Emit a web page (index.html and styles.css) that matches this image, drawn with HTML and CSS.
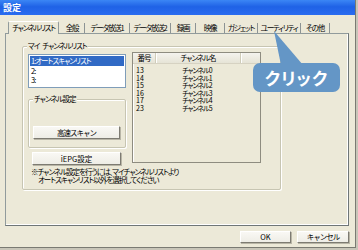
FILE: index.html
```html
<!DOCTYPE html>
<html lang="ja">
<head>
  <meta charset="UTF-8">
  <title>設定</title>
  <link rel="stylesheet" href="styles.css">
</head>
<body>
  <div class="window">
    <div class="titlebar">設定</div>
    <div class="dialog">
      <div class="tabs">
        <div class="tab active" style="width:51px">チャンネルリスト</div>
        <div class="tab" style="width:24px">全般</div>
        <div class="tab" style="width:44px">データ放送1</div>
        <div class="tab" style="width:40px">データ放送2</div>
        <div class="tab" style="width:24px">録画</div>
        <div class="tab" style="width:28px">映像</div>
        <div class="tab" style="width:32px">ガジェット</div>
        <div class="tab" style="width:42px">ユーティリティ</div>
        <div class="tab" style="width:28px">その他</div>
      </div>

      <div class="panel">
        <div class="group my-list">
          <span class="group-label">マイ<span class="gap">チャンネルリスト</span></span>
          <div class="left-col">
            <ul class="listbox">
              <li class="selected">1:オートスキャンリスト</li>
              <li>2:</li>
              <li>3:</li>
            </ul>
            <div class="group ch-settings">
              <span class="group-label">チャンネル設定</span>
              <button class="btn scan-btn">高速スキャン</button>
            </div>
            <button class="btn epg-btn">iEPG設定</button>
            <p class="note">※チャンネル設定を行うには、マイチャンネルリストより<br><span class="indent">オートスキャンリスト以外を選択してください</span></p>
          </div>

          <div class="listview">
            <div class="lv-header">
              <div class="col-num">番号</div>
              <div class="col-name">チャンネル名</div>
              <div class="col-rest"></div>
            </div>
            <div class="lv-rows">
              <div class="lv-row"><span class="col-num">13</span><span class="col-name">チャンネル0</span></div>
              <div class="lv-row"><span class="col-num">14</span><span class="col-name">チャンネル1</span></div>
              <div class="lv-row"><span class="col-num">15</span><span class="col-name">チャンネル2</span></div>
              <div class="lv-row"><span class="col-num">16</span><span class="col-name">チャンネル3</span></div>
              <div class="lv-row"><span class="col-num">17</span><span class="col-name">チャンネル4</span></div>
              <div class="lv-row"><span class="col-num">23</span><span class="col-name">チャンネル5</span></div>
            </div>
          </div>
        </div>
      </div>

      <div class="dialog-buttons">
        <button class="btn ok-btn">OK</button>
        <button class="btn cancel-btn">キャンセル</button>
      </div>
    </div>

    <!-- callout pointing at the utility tab -->
    <svg class="callout-tail" width="40" height="40" viewBox="0 0 40 40">
      <polygon points="1,0 8,34 30,34" fill="#6496c6"/>
    </svg>
    <div class="callout">クリック</div>
  </div>
</body>
</html>
```

FILE: styles.css
```css
body {
  margin: 0;
  width: 358px;
  height: 250px;
  overflow: hidden;
  background-color: #c8c5b8;
  font-family: "Noto Sans CJK JP", "Noto Sans", sans-serif;
  font-feature-settings: "palt";
  font-size: 7.5px;
  letter-spacing: -1px;
  color: #000;
}

.window {
  position: relative;
  width: 355px;
  height: 247px;
  background-color: #ece9d8;
  border-right: 1px solid #7a7a72;
  border-bottom: 1px solid #7a7a72;
}

.titlebar {
  height: 15px;
  line-height: 15px;
  padding-left: 3px;
  background: linear-gradient(#3b86f5, #1f62e6 45%, #2a6cf0);
  color: #fff;
  font-size: 9px;
  font-weight: bold;
  letter-spacing: 0;
}

.dialog {
  padding: 5px 0 0 5px;
}

/* tabs */
.tabs {
  display: flex;
  align-items: flex-end;
  height: 13px;
  padding-left: 3px;
}

.tab {
  height: 10px;
  line-height: 10px;
  text-align: center;
  white-space: nowrap;
  letter-spacing: -1.2px;
  border-right: 1px solid #8c9394;
}

.tab.active {
  position: relative;
  height: 13px;
  line-height: 12px;
  margin-bottom: -1px;
  margin-right: 1px;
  background-color: #ece9d8;
  border: 1px solid #919b9c;
  border-bottom: none;
  border-top-color: #fff;
  border-radius: 2px 2px 0 0;
  z-index: 1;
  box-sizing: border-box;
}

.panel {
  width: 344px;
  height: 193px;
  border: 1px solid #919b9c;
  border-right-color: #6f7677;
  border-bottom-color: #6f7677;
  box-shadow: inset -1px -1px 0 #fff;
  padding: 12px 0 0 16px;
  box-sizing: border-box;
}

/* group boxes */
.group {
  position: relative;
  border: 1px solid #c7c5b2;
  box-shadow: inset 1px 1px 0 #fff, 1px 1px 0 #fff;
  border-radius: 2px;
  box-sizing: border-box;
}

.group-label {
  position: absolute;
  top: -6px;
  left: 4px;
  padding: 0 1px;
  line-height: 10px;
  background-color: #ece9d8;
  white-space: nowrap;
}

.group-label .gap {
  margin-left: 3px;
}

.my-list {
  display: flex;
  gap: 6px;
  width: 259px;
  height: 144px;
  padding: 7px 0 0 5px;
}

.left-col {
  display: flex;
  flex-direction: column;
  width: 98px;
}

.listbox {
  list-style: none;
  margin: 0;
  padding: 1px;
  height: 34px;
  background-color: #fff;
  border: 1px solid #7f9db9;
  box-sizing: border-box;
}

.listbox li {
  height: 9px;
  line-height: 9px;
  padding-left: 1px;
}

.listbox li.selected {
  height: 10px;
  line-height: 10px;
  background-color: #316ac5;
  color: #fff;
}

.ch-settings {
  display: flex;
  flex-direction: column;
  justify-content: flex-end;
  height: 49px;
  margin-top: 11px;
  padding: 0 0 8px 4px;
}

.btn {
  display: block;
  padding: 0;
  font-family: inherit;
  font-size: 7.5px;
  letter-spacing: -1px;
  line-height: 10px;
  color: #000;
  background: linear-gradient(#f9f8f4, #eeede6);
  border: 1px solid;
  border-color: #fff #7d7b72 #7d7b72 #fff;
  box-shadow: 1px 1px 0 #b8b5a6;
  box-sizing: border-box;
}

.scan-btn {
  width: 87px;
  height: 13px;
}

.epg-btn {
  width: 89px;
  height: 13px;
  margin: 4px 0 0 4px;
}

.ok-btn,
.epg-btn {
  letter-spacing: 0;
}

.note {
  margin: 3px 0 0 3px;
  line-height: 8px;
  white-space: nowrap;
}

.note .indent {
  padding-left: 7px;
}

/* list view */
.listview {
  width: 129px;
  height: 111px;
  margin-top: -2px;
  background-color: #ece9d8;
  border: 1px solid #8e8c80;
  box-shadow: inset 1px 1px 0 #fff;
  box-sizing: border-box;
}

.lv-header {
  display: flex;
  height: 10px;
  line-height: 10px;
  border-bottom: 1px solid #d6d2c2;
  background: linear-gradient(#f4f3ee, #e6e4d6);
}

.lv-header > div {
  text-align: center;
  border-right: 1px solid #cfccb9;
  box-shadow: 1px 0 0 #fff;
}

.col-num {
  width: 22px;
}

.col-name {
  width: 84px;
  text-align: center;
}

.lv-header .col-rest {
  flex: 1;
  border-right: none;
  box-shadow: none;
}

.lv-rows {
  padding-top: 3px;
}

.lv-row {
  display: flex;
  height: 7.5px;
  line-height: 7.5px;
  font-size: 7px;
}

.lv-row .col-num {
  padding-left: 3px;
  letter-spacing: 0;
  box-sizing: border-box;
}

/* OK / cancel */
.dialog-buttons {
  display: flex;
  justify-content: flex-end;
  gap: 6px;
  margin-top: 5px;
  padding-right: 6px;
}

.ok-btn {
  width: 51px;
  height: 12px;
}

.cancel-btn {
  width: 52px;
  height: 12px;
}

/* callout */
.callout {
  position: absolute;
  left: 253px;
  top: 63px;
  width: 87px;
  height: 29px;
  line-height: 29px;
  text-align: center;
  background-color: #6496c6;
  border-radius: 7px;
  color: #fff;
  font-size: 17px;
  font-weight: bold;
  letter-spacing: 1px;
}

.callout-tail {
  position: absolute;
  left: 273px;
  top: 31px;
}
```
